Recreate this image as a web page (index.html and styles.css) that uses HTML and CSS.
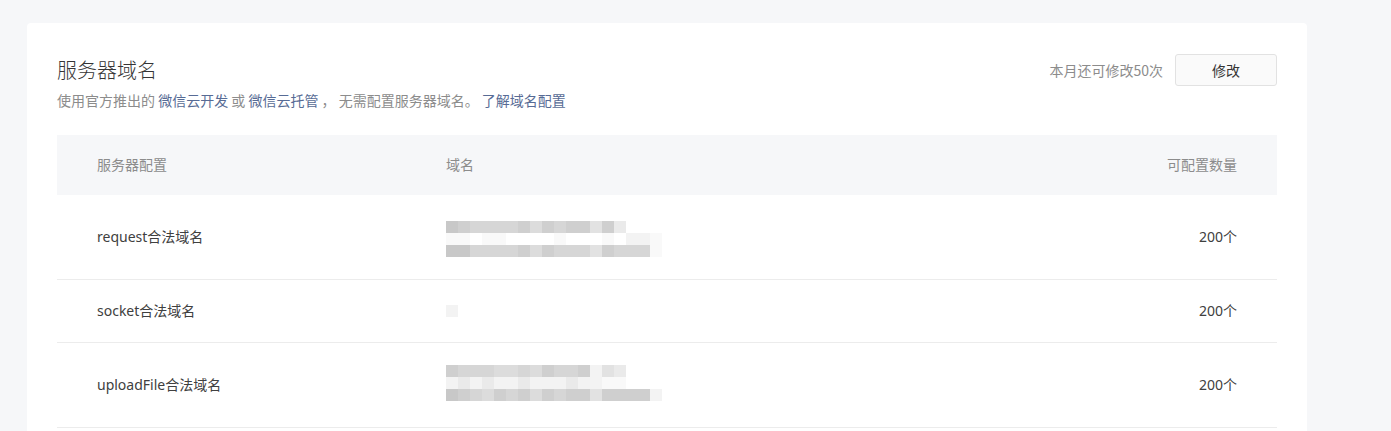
FILE: index.html
```html
<!DOCTYPE html>
<html lang="zh-CN">
<head>
<meta charset="utf-8">
<title>服务器域名</title>
<link rel="stylesheet" href="styles.css">
</head>
<body>
<main class="page">
  <section class="card">
    <header class="card-head">
      <div class="head-text">
        <h2 class="title">服务器域名</h2>
        <p class="desc">使用官方推出的 <a class="link">微信云开发</a> 或 <a class="link">微信云托管</a> ， 无需配置服务器域名。 <a class="link">了解域名配置</a></p>
      </div>
      <div class="head-actions">
        <span class="quota">本月还可修改50次</span>
        <button class="btn">修改</button>
      </div>
    </header>

    <div class="table">
      <div class="row row-head">
        <div class="cell cell-name">服务器配置</div>
        <div class="cell cell-domain">域名</div>
        <div class="cell cell-count">可配置数量</div>
      </div>

      <div class="row">
        <div class="cell cell-name">request合法域名</div>
        <div class="cell cell-domain">
          <div class="blur blur-down">
            <div class="bl"><i class="s1"></i><i class="s2"></i><i class="s3"></i><i class="s3"></i><i class="s3"></i><i class="s3"></i><i class="s2"></i><i class="s4"></i><i class="s2"></i><i class="s3"></i><i class="s2"></i><i class="s2"></i><i class="s5"></i><i class="s2"></i><i class="s6"></i></div>
            <div class="bl"><i class="s8"></i><i class="s8"></i><i class="s0"></i><i class="s8"></i><i class="s8"></i><i class="s0"></i><i class="s0"></i><i class="s0"></i><i class="s0"></i><i class="s8"></i><i class="s0"></i><i class="s0"></i><i class="s0"></i><i class="s8"></i><i class="s0"></i><i class="s7"></i><i class="s7"></i><i class="s8"></i></div>
            <div class="bl"><i class="s1"></i><i class="s1"></i><i class="s3"></i><i class="s3"></i><i class="s3"></i><i class="s3"></i><i class="s2"></i><i class="s4"></i><i class="s2"></i><i class="s3"></i><i class="s3"></i><i class="s3"></i><i class="s5"></i><i class="s2"></i><i class="s3"></i><i class="s3"></i><i class="s3"></i><i class="s8"></i></div>
          </div>
        </div>
        <div class="cell cell-count">200个</div>
      </div>

      <div class="row">
        <div class="cell cell-name">socket合法域名</div>
        <div class="cell cell-domain">
          <div class="blur">
            <div class="bl"><i class="s7"></i></div>
          </div>
        </div>
        <div class="cell cell-count">200个</div>
      </div>

      <div class="row">
        <div class="cell cell-name">uploadFile合法域名</div>
        <div class="cell cell-domain">
          <div class="blur blur-up">
            <div class="bl"><i class="s2"></i><i class="s3"></i><i class="s3"></i><i class="s3"></i><i class="s4"></i><i class="s4"></i><i class="s3"></i><i class="s4"></i><i class="s2"></i><i class="s3"></i><i class="s3"></i><i class="s2"></i><i class="s7"></i><i class="s5"></i><i class="s6"></i></div>
            <div class="bl"><i class="s7"></i><i class="s6"></i><i class="s7"></i><i class="s6"></i><i class="s7"></i><i class="s7"></i><i class="s6"></i><i class="s7"></i><i class="s7"></i><i class="s7"></i><i class="s6"></i><i class="s7"></i><i class="s7"></i><i class="s8"></i><i class="s8"></i></div>
            <div class="bl"><i class="s1"></i><i class="s2"></i><i class="s3"></i><i class="s4"></i><i class="s2"></i><i class="s3"></i><i class="s2"></i><i class="s4"></i><i class="s2"></i><i class="s3"></i><i class="s2"></i><i class="s2"></i><i class="s5"></i><i class="s2"></i><i class="s2"></i><i class="s2"></i><i class="s2"></i><i class="s7"></i></div>
          </div>
        </div>
        <div class="cell cell-count">200个</div>
      </div>
    </div>
  </section>
</main>
</body>
</html>
```

FILE: styles.css
```css
* { box-sizing: border-box; }

html, body {
  margin: 0;
  padding: 0;
  background: #f6f7f9;
}

body {
  font-family: "Noto Sans", "Noto Sans CJK SC", sans-serif;
  font-size: 14px;
  color: #353535;
}

.page {
  padding: 23px 0 0 27px;
}

.card {
  width: 1280px;
  min-height: 420px;
  background: #fff;
  border-radius: 4px;
  padding: 31px 30px 0 30px;
}

.card-head {
  display: flex;
  justify-content: space-between;
  align-items: flex-start;
}

.title {
  margin: 0;
  font-size: 20px;
  font-weight: 300;
  line-height: 32px;
  color: #353535;
  font-family: "Noto Sans CJK SC", sans-serif;
}

.desc {
  margin: 4px 0 0 0;
  font-size: 14px;
  line-height: 20px;
  color: #8c8c8c;
  font-family: "Noto Sans CJK SC", sans-serif;
}

.link {
  color: #576b95;
  text-decoration: none;
  cursor: pointer;
}

.head-actions {
  display: flex;
  align-items: center;
  gap: 12px;
  height: 32px;
}

.quota {
  color: #8c8c8c;
  font-size: 14px;
  font-family: "Noto Sans CJK SC", sans-serif;
}

.btn {
  width: 102px;
  height: 32px;
  background: #fafafa;
  border: 1px solid #e2e2e2;
  border-radius: 3px;
  color: #353535;
  font-size: 14px;
  font-family: "Noto Sans CJK SC", sans-serif;
  padding: 0;
}

.table {
  margin-top: 25px;
}

.row {
  display: grid;
  grid-template-columns: 389px 1fr 300px;
  align-items: center;
  border-bottom: 1px solid #ececec;
}

.row-head {
  background: #f6f7f9;
  height: 60px;
  border-bottom: none;
}

.row-head .cell {
  color: #8c8c8c;
  padding: 0;
}

.row-head .cell-name { padding-left: 40px; }
.row-head .cell-count { padding-right: 40px; }

.cell {
  padding: 24px 0;
  line-height: 14px;
  color: #404040;
}

.cell-name {
  padding-left: 40px;
}

.cell-count {
  text-align: right;
  padding-right: 40px;
}

.blur {
  display: flex;
  flex-direction: column;
}

.blur-down { margin-top: 2px; margin-bottom: -2px; }
.blur-up { margin-top: -2px; margin-bottom: 2px; }

.bl {
  display: flex;
  height: 12px;
}

.bl i {
  display: block;
  width: 12px;
  height: 12px;
}

.s0 { background: #ffffff; }
.s1 { background: #c8c8c8; }
.s2 { background: #cfcfcf; }
.s3 { background: #d6d6d6; }
.s4 { background: #dcdcdc; }
.s5 { background: #e2e2e2; }
.s6 { background: #eaeaea; }
.s7 { background: #f3f3f3; }
.s8 { background: #f9f9f9; }
```
